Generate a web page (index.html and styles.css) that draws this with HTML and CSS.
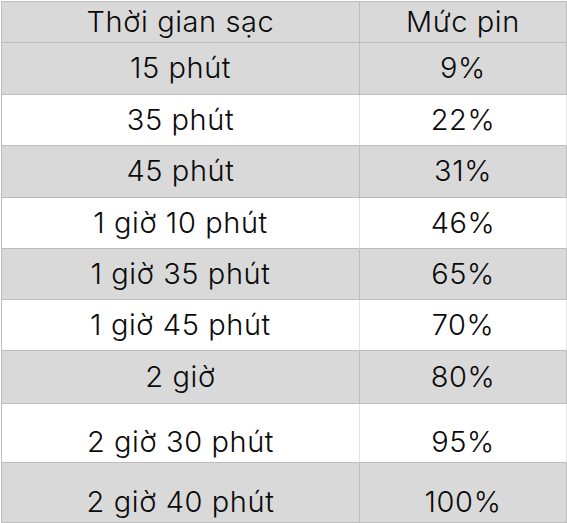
FILE: index.html
```html
<!DOCTYPE html>
<html lang="vi">
<head>
<meta charset="utf-8">
<title>Thời gian sạc</title>
<link rel="stylesheet" href="styles.css">
</head>
<body>
<div class="tbl">
  <div class="row gray h41"><div class="cell">Thời gian sạc</div><div class="cell">Mức pin</div></div>
  <div class="row gray h52"><div class="cell">15 phút</div><div class="cell">9%</div></div>
  <div class="row white h51"><div class="cell">35 phút</div><div class="cell">22%</div></div>
  <div class="row gray h52"><div class="cell">45 phút</div><div class="cell">31%</div></div>
  <div class="row white h51"><div class="cell">1 giờ 10 phút</div><div class="cell">46%</div></div>
  <div class="row gray h51"><div class="cell">1 giờ 35 phút</div><div class="cell">65%</div></div>
  <div class="row white h51"><div class="cell">1 giờ 45 phút</div><div class="cell">70%</div></div>
  <div class="row gray h53"><div class="cell">2 giờ</div><div class="cell">80%</div></div>
  <div class="row white h59 bottom"><div class="cell">2 giờ 30 phút</div><div class="cell">95%</div></div>
  <div class="row gray h60 bottom"><div class="cell">2 giờ 40 phút</div><div class="cell">100%</div></div>
</div>
</body>
</html>
```
FILE: styles.css
```css
html, body {
  margin: 0;
  padding: 0;
  background: #ffffff;
}
body {
  padding: 1px 0 0 1px;
  font-family: "Inter", "Liberation Sans", sans-serif;
  font-size: 29px;
  font-weight: 350;
  letter-spacing: 0.6px;
  color: #0a0a0a;
}
.tbl {
  width: 566px;
  border-top: 1px solid #bdbdbd;
  border-left: 1px solid #bdbdbd;
  box-sizing: border-box;
}
.row {
  display: grid;
  grid-template-columns: 358px 207px;
}
.cell {
  box-sizing: border-box;
  border-right: 1px solid #bdbdbd;
  border-bottom: 1px solid #bdbdbd;
  display: flex;
  align-items: center;
  justify-content: center;
  line-height: 1;
  padding-bottom: 2px;
}
.gray { background: #d9d9d9; }
.white { background: #ffffff; }
.white .cell { border-right-color: #e2e2e2; }
.h41 .cell { height: 41px; }
.h51 .cell { height: 51px; }
.h52 .cell { height: 52px; }
.h53 .cell { height: 53px; }
.h59 .cell { height: 59px; }
.h60 .cell { height: 60px; }
.bottom .cell {
  align-items: flex-end;
  padding-bottom: 6px;
}
```
